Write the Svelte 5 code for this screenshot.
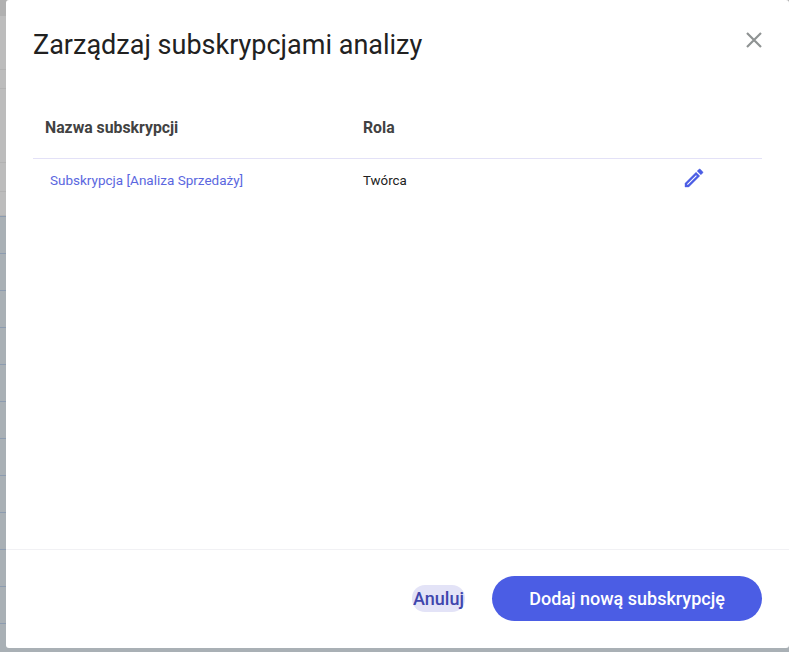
<script lang="ts">
    const rows = [
        { name: 'Subskrypcja [Analiza Sprzedaży]', role: 'Twórca' }
    ];
    const topRows = [54, 19, 74, 29, 24];
    const stripes = Array.from({ length: 12 }, (_, i) => i);
</script>

<div class="page">
    <div class="backdrop">
        <div class="top-area">
            <div class="top-bar"></div>
            {#each topRows as h, i (i)}
                <div class="top-row" style="height: {h}px"></div>
            {/each}
        </div>
        <div class="stripes">
            {#each stripes as s (s)}
                <div class="stripe"></div>
            {/each}
        </div>
        <div class="bottom">
            <div class="bottom-grey"></div>
            <div class="bottom-navy"></div>
        </div>
    </div>

    <div class="modal">
        <header class="head">
            <h1>Zarządzaj subskrypcjami analizy</h1>
            <button class="close" aria-label="Zamknij">
                <svg width="16" height="16" viewBox="0 0 16 16">
                    <path d="M1 1 L15 15 M15 1 L1 15" stroke="#8f9393" stroke-width="2.2" fill="none" />
                </svg>
            </button>
        </header>

        <div class="body">
            <div class="row head-row">
                <div class="col-name">Nazwa subskrypcji</div>
                <div class="col-role">Rola</div>
            </div>
            {#each rows as row (row.name)}
                <div class="row data-row">
                    <a class="col-name link" href="#sub">{row.name}</a>
                    <div class="col-role">{row.role}</div>
                    <button class="edit" aria-label="Edytuj">
                        <svg width="24" height="24" viewBox="0 0 24 24">
                            <path fill="#4b5de4" stroke="#4b5de4" stroke-width="0.4" d="M3 17.25V21h3.75L17.81 9.94l-3.75-3.75L3 17.25zM5.92 19H5v-.92l9.06-9.06.92.92L5.92 19zM20.71 7.04a1 1 0 0 0 0-1.41l-2.34-2.34a1 1 0 0 0-1.41 0l-1.83 1.83 3.75 3.75 1.83-1.83z" />
                        </svg>
                    </button>
                </div>
            {/each}
        </div>

        <footer class="foot">
            <button class="cancel">Anuluj</button>
            <button class="primary">Dodaj nową subskrypcję</button>
        </footer>
    </div>
</div>

<style>
    :global(body) {
        margin: 0;
    }
    .page {
        position: relative;
        width: 789px;
        height: 652px;
        overflow: hidden;
        font-family: Roboto, "Liberation Sans", sans-serif;
    }
    .backdrop {
        position: absolute;
        inset: 0;
        display: flex;
        flex-direction: column;
        background: #a9b0b5;
    }
    .top-area {
        height: 216px;
        background: #bcbcbc;
    }
    .top-bar {
        height: 16px;
        background: #b0b0b0;
    }
    .top-row {
        box-sizing: border-box;
        border-bottom: 1px solid #b2b2b2;
    }
    .stripes {
        flex: 1;
    }
    .stripe {
        height: 37px;
        box-sizing: border-box;
        border-top: 1px solid #8d9cb0;
    }
    .bottom {
        display: flex;
        height: 4px;
    }
    .bottom-grey {
        width: 295px;
        background: #aeb2b5;
    }
    .bottom-navy {
        flex: 1;
        background: #003a70;
    }
    .modal {
        position: absolute;
        left: 6px;
        top: 0;
        width: 783px;
        height: 648px;
        display: flex;
        flex-direction: column;
        background: #fff;
        border-radius: 3px;
    }
    .head {
        display: flex;
        justify-content: space-between;
        padding: 28px 27px 0 27px;
    }
    h1 {
        margin: 0;
        font-size: 27px;
        line-height: 34px;
        font-weight: 400;
        color: #212121;
    }
    .close {
        width: 16px;
        height: 16px;
        padding: 0;
        margin-top: 4px;
        background: none;
        border: none;
        line-height: 0;
    }
    .body {
        flex: 1;
        padding: 47px 27px 0;
    }
    .row {
        display: flex;
        align-items: center;
    }
    .head-row {
        height: 50px;
        padding-bottom: 13px;
        box-sizing: border-box;
        border-bottom: 1px solid #e3e1f7;
        font-size: 15.8px;
        font-weight: 700;
        color: #424242;
    }
    .head-row .col-name {
        padding-left: 12px;
    }
    .data-row {
        height: 42px;
        font-size: 13.3px;
        color: #212121;
    }
    .col-name {
        width: 330px;
        box-sizing: border-box;
    }
    .link {
        padding-left: 17px;
        font-size: 13.5px;
        color: #5b67e0;
        text-decoration: none;
    }
    .col-role {
        width: 319px;
    }
    .edit {
        width: 24px;
        height: 24px;
        padding: 0;
        margin-top: -4px;
        background: none;
        border: none;
    }
    .foot {
        height: 99px;
        display: flex;
        align-items: center;
        justify-content: flex-end;
        gap: 27px;
        padding: 0 27px 1px 0;
        box-sizing: border-box;
        border-top: 1px solid #f1f1f4;
    }
    .cancel {
        height: 27px;
        padding: 0 1px;
        border: none;
        border-radius: 13px;
        background: #e3e3f7;
        color: #3f46ad;
        font: 500 18px Roboto, "Liberation Sans", sans-serif;
    }
    .primary {
        width: 270px;
        height: 45px;
        border: none;
        border-radius: 23px;
        background: #4b5de4;
        color: #fff;
        font: 500 18px Roboto, "Liberation Sans", sans-serif;
    }
</style>
